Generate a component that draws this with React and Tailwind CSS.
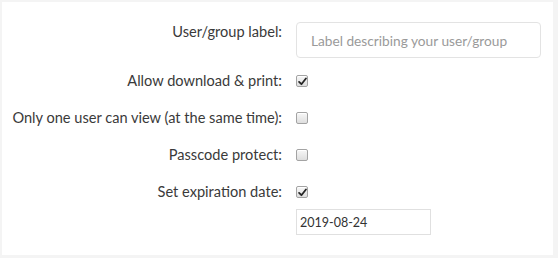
import { useState } from 'react';

const Box = ({ checked, onChange }) => (
  <button
    type="button"
    onClick={onChange}
    className="w-[12px] h-[12px] rounded-[2px] border border-[#a3a3a3] bg-gradient-to-b from-[#f7f7f7] to-[#dedede] flex items-center justify-center shadow-[inset_0_1px_0_#fff]"
  >
    {checked && (
      <svg viewBox="0 0 10 10" className="w-[9px] h-[9px]">
        <path d="M1.2 5.4 L3.8 8 L8.8 1.6" fill="none" stroke="#262626" strokeWidth="2" strokeLinecap="round" strokeLinejoin="round" />
      </svg>
    )}
  </button>
);

const Row = ({ label, children, className = '' }) => (
  <div className={`flex items-start ${className}`}>
    <div className="w-[280px] text-right leading-[20px] text-[14.6px] text-[#3a3a3a]">{label}</div>
    <div className="ml-[14px] flex flex-col">{children}</div>
  </div>
);

export default function App() {
  const [opts, setOpts] = useState({ download: true, single: false, passcode: false, expire: true });
  const toggle = (k) => setOpts((o) => ({ ...o, [k]: !o[k] }));

  return (
    <div className="w-[558px] h-[258px] bg-[#f4f4f4] pt-[2px] pl-[2px] font-['Lato',sans-serif]">
      <div className="w-[551px] h-[253px] bg-white pt-[20px]">
        <Row label="User/group label:" className="h-[36px]">
          <input
            placeholder="Label describing your user/group"
            className="w-[245px] h-[36px] rounded-[4px] border border-[#e3e3e3] px-[14px] text-[13.7px] text-[#333] placeholder:text-[#9a9a9a] outline-none"
          />
        </Row>
        <Row label="Allow download & print:" className="mt-[13px] h-[20px]">
          <div className="h-[20px] flex items-center"><Box checked={opts.download} onChange={() => toggle('download')} /></div>
        </Row>
        <Row label="Only one user can view (at the same time):" className="mt-[17px] h-[20px]">
          <div className="h-[20px] flex items-center"><Box checked={opts.single} onChange={() => toggle('single')} /></div>
        </Row>
        <Row label="Passcode protect:" className="mt-[17px] h-[20px]">
          <div className="h-[20px] flex items-center"><Box checked={opts.passcode} onChange={() => toggle('passcode')} /></div>
        </Row>
        <Row label="Set expiration date:" className="mt-[17px]">
          <div className="h-[20px] flex items-center"><Box checked={opts.expire} onChange={() => toggle('expire')} /></div>
          <input
            defaultValue="2019-08-24"
            className="mt-[7px] w-[135px] h-[26px] border border-[#e0e0e0] px-[3px] text-[12.5px] text-[#333] outline-none"
          />
        </Row>
      </div>
    </div>
  );
}
